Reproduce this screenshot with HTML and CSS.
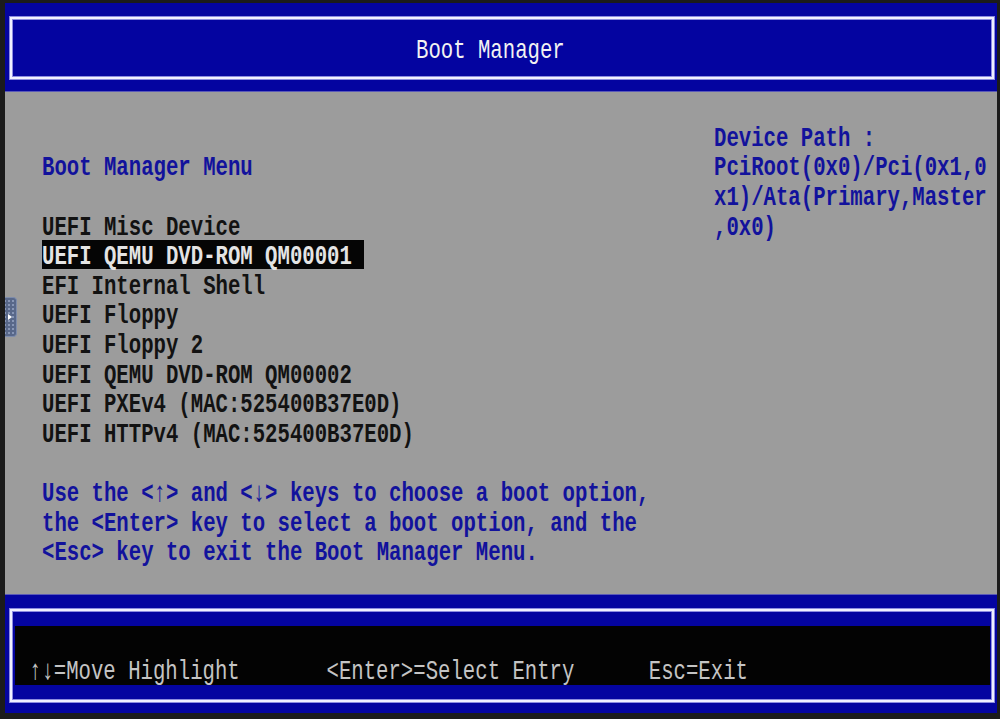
FILE: index.html
```html
<!DOCTYPE html>
<html lang="en">
<head>
<meta charset="utf-8">
<title>Boot Manager</title>
<link rel="stylesheet" href="styles.css">
</head>
<body>
<div class="screen">
  <header class="header">
    <div class="frame title-frame">
      <span class="g thin">Boot Manager</span>
    </div>
  </header>

  <main class="main">
    <section class="menu">
      <div class="row blue"><span class="g">Boot Manager Menu</span></div>
      <div class="row"></div>
      <div class="row"><span class="g">UEFI Misc Device</span></div>
      <div class="row sel"><span class="g">UEFI QEMU DVD-ROM QM00001</span></div>
      <div class="row"><span class="g">EFI Internal Shell</span></div>
      <div class="row"><span class="g">UEFI Floppy</span></div>
      <div class="row"><span class="g">UEFI Floppy 2</span></div>
      <div class="row"><span class="g">UEFI QEMU DVD-ROM QM00002</span></div>
      <div class="row"><span class="g">UEFI PXEv4 (MAC:525400B37E0D)</span></div>
      <div class="row"><span class="g">UEFI HTTPv4 (MAC:525400B37E0D)</span></div>
      <div class="row"></div>
      <div class="row blue"><span class="g">Use the &lt;↑&gt; and &lt;↓&gt; keys to choose a boot option,</span></div>
      <div class="row blue"><span class="g">the &lt;Enter&gt; key to select a boot option, and the</span></div>
      <div class="row blue"><span class="g">&lt;Esc&gt; key to exit the Boot Manager Menu.</span></div>
    </section>
    <aside class="help">
      <div class="row blue"><span class="g">Device Path :</span></div>
      <div class="row blue"><span class="g">PciRoot(0x0)/Pci(0x1,0</span></div>
      <div class="row blue"><span class="g">x1)/Ata(Primary,Master</span></div>
      <div class="row blue"><span class="g">,0x0)</span></div>
    </aside>
  </main>

  <footer class="footer">
    <div class="frame foot-frame">
      <div class="keys">
        <div class="row keyrow">
          <span class="key k1"><span class="g thin">↑↓=Move Highlight</span></span>
          <span class="key k2"><span class="g thin">&lt;Enter&gt;=Select Entry</span></span>
          <span class="key"><span class="g thin">Esc=Exit</span></span>
        </div>
      </div>
    </div>
  </footer>
</div>

<div class="handle"><span class="arrow"></span></div>
</body>
</html>
```

FILE: styles.css
```css
:root {
  --row: 29.6px;
  --blue: #0404a0;
  --gray: #9c9c9c;
}

html, body {
  margin: 0;
  padding: 0;
  background: #1b1b1b;
  height: 719px;
  overflow: hidden;
}

.screen {
  position: relative;
  margin: 3px 3px 0 5px;
  width: 992px;
  font-family: "Liberation Mono", "DejaVu Sans Mono", monospace;
  font-size: 20.66px;
  font-weight: bold;
  color: #121212;
}

.row {
  height: var(--row);
  display: flex;
  align-items: center;
  white-space: pre;
}

.g {
  display: inline-block;
  transform: translateY(3.5px) scaleY(1.34);
  transform-origin: center;
  line-height: 1;
}

.thin {
  font-weight: normal;
}

/* header */
.header {
  height: calc(var(--row) * 3);
  box-sizing: border-box;
  background: var(--blue);
  padding: 14.3px 3px 0 5px;
  border-bottom: 1px solid #5a5ab8;
}

.frame {
  box-sizing: border-box;
  border: 2px solid #f0f0ff;
  box-shadow: 0 0 0 1px #8c8ce0, inset 0 0 0 1px #8c8ce0;
}

.title-frame {
  height: 62.2px;
  display: flex;
  align-items: center;
  padding-left: 404px;
  color: #f2f2f2;
}

/* main */
.main {
  height: calc(var(--row) * 17 - 1px);
  background: var(--gray);
  display: flex;
  padding-top: var(--row);
  box-sizing: border-box;
}

.menu {
  width: 672px;
  padding-left: 37px;
  padding-top: var(--row);
}

.help {
  flex: 1;
}

.blue {
  color: #12129c;
}

.sel {
  width: 26ch;
  background: #050505;
  color: #e4e4e4;
}

/* footer */
.footer {
  height: calc(var(--row) * 4 + 0.4px);
  box-sizing: border-box;
  background: var(--blue);
  padding: 14.3px 3px 0 5px;
  border-top: 1px solid #5a5ab8;
}

.foot-frame {
  height: 92.8px;
  padding: 14.4px 2px 0 3px;
}

.keys {
  height: 59px;
  background: #030303;
  padding: 28px 0 0 14px;
  box-sizing: border-box;
  color: #c4c4c4;
}

.key {
  display: inline-block;
}

.k1 { width: 24ch; }
.k2 { width: 26ch; }

/* side drawer handle overlay */
.handle {
  position: absolute;
  left: 5px;
  top: 297px;
  width: 12px;
  height: 40px;
  box-sizing: border-box;
  background-color: #58688a;
  background-image: radial-gradient(circle, #8796b6 0.8px, transparent 1.2px);
  background-size: 4px 4px;
  background-position: 2px 1px;
  border: 1px solid #7d8cac;
  border-left: none;
  border-radius: 0 4px 4px 0;
}

.arrow {
  position: absolute;
  left: 3px;
  top: 16px;
  width: 0;
  height: 0;
  border-top: 3px solid transparent;
  border-bottom: 3px solid transparent;
  border-left: 4px solid #ffffff;
}
```
